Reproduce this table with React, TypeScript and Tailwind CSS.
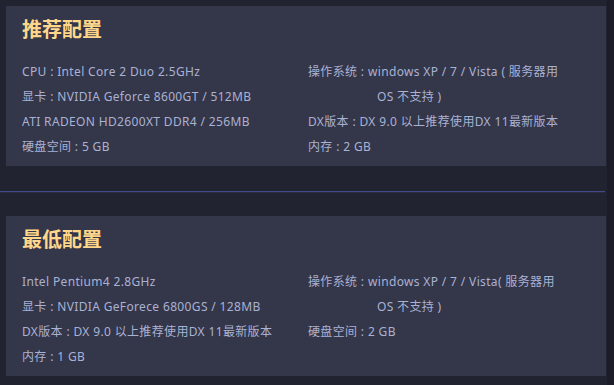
import React from "react";

const font = { fontFamily: '"Noto Sans", "Noto Sans CJK SC", sans-serif' };

type Row = { label?: string; value: string; cont?: string };

function Cell({ r }: { r: Row }) {
  return (
    <div className="flex">
      {r.label ? <span className="whitespace-pre">{r.label}</span> : null}
      <div className="flex flex-col">
        <span className="whitespace-nowrap">{r.value}</span>
        {r.cont ? <span className="whitespace-nowrap ml-[9px]">{r.cont}</span> : null}
      </div>
    </div>
  );
}

function Panel({ title, left, right }: { title: string; left: Row[]; right: Row[] }) {
  return (
    <div className="mx-[6px] w-[600px] bg-[#343649] pl-[16px] pt-[7px] pb-[7px]">
      <div
        className="text-[20px] leading-[32px] font-bold text-[#ffd68a]"
        style={{ fontFamily: '"Noto Sans CJK SC", sans-serif' }}
      >
        {title}
      </div>
      <div className="mt-[14px] grid grid-cols-[286px_1fr] text-[12px] leading-[25px] tracking-[0.35px] text-[#aab2d4]">
        <div className="flex flex-col">
          {left.map((r, i) => (
            <Cell key={i} r={r} />
          ))}
        </div>
        <div className="flex flex-col">
          {right.map((r, i) => (
            <Cell key={i} r={r} />
          ))}
        </div>
      </div>
    </div>
  );
}

export default function App() {
  return (
    <div className="w-[614px] h-[385px] overflow-hidden bg-[#222330] flex" style={font}>
      <div className="w-[607px] flex flex-col pt-[6px]">
        <Panel
          title="推荐配置"
          left={[
            { value: "CPU : Intel Core 2 Duo 2.5GHz" },
            { value: "显卡 : NVIDIA Geforce 8600GT / 512MB" },
            { value: "ATI RADEON HD2600XT DDR4 / 256MB" },
            { value: "硬盘空间 : 5 GB" },
          ]}
          right={[
            { label: "操作系统 : ", value: "windows XP / 7 / Vista ( 服务器用", cont: "OS 不支持 )" },
            { value: "DX版本 : DX 9.0 以上推荐使用DX 11最新版本" },
            { value: "内存 : 2 GB" },
          ]}
        />
        <div className="mt-[25px] h-[2px] w-[605px] border-t border-[#424a8c] bg-[#2a2c40]" />
        <div className="mt-[23px]">
          <Panel
            title="最低配置"
            left={[
              { value: "Intel Pentium4 2.8GHz" },
              { value: "显卡 : NVIDIA GeForece 6800GS / 128MB" },
              { value: "DX版本 : DX 9.0 以上推荐使用DX 11最新版本" },
              { value: "内存 : 1 GB" },
            ]}
            right={[
              { label: "操作系统 : ", value: "windows XP / 7 / Vista( 服务器用", cont: "OS 不支持 )" },
              { value: "硬盘空间 : 2 GB" },
            ]}
          />
        </div>
      </div>
      <div className="flex-1 bg-[#1b1c28]" />
    </div>
  );
}
